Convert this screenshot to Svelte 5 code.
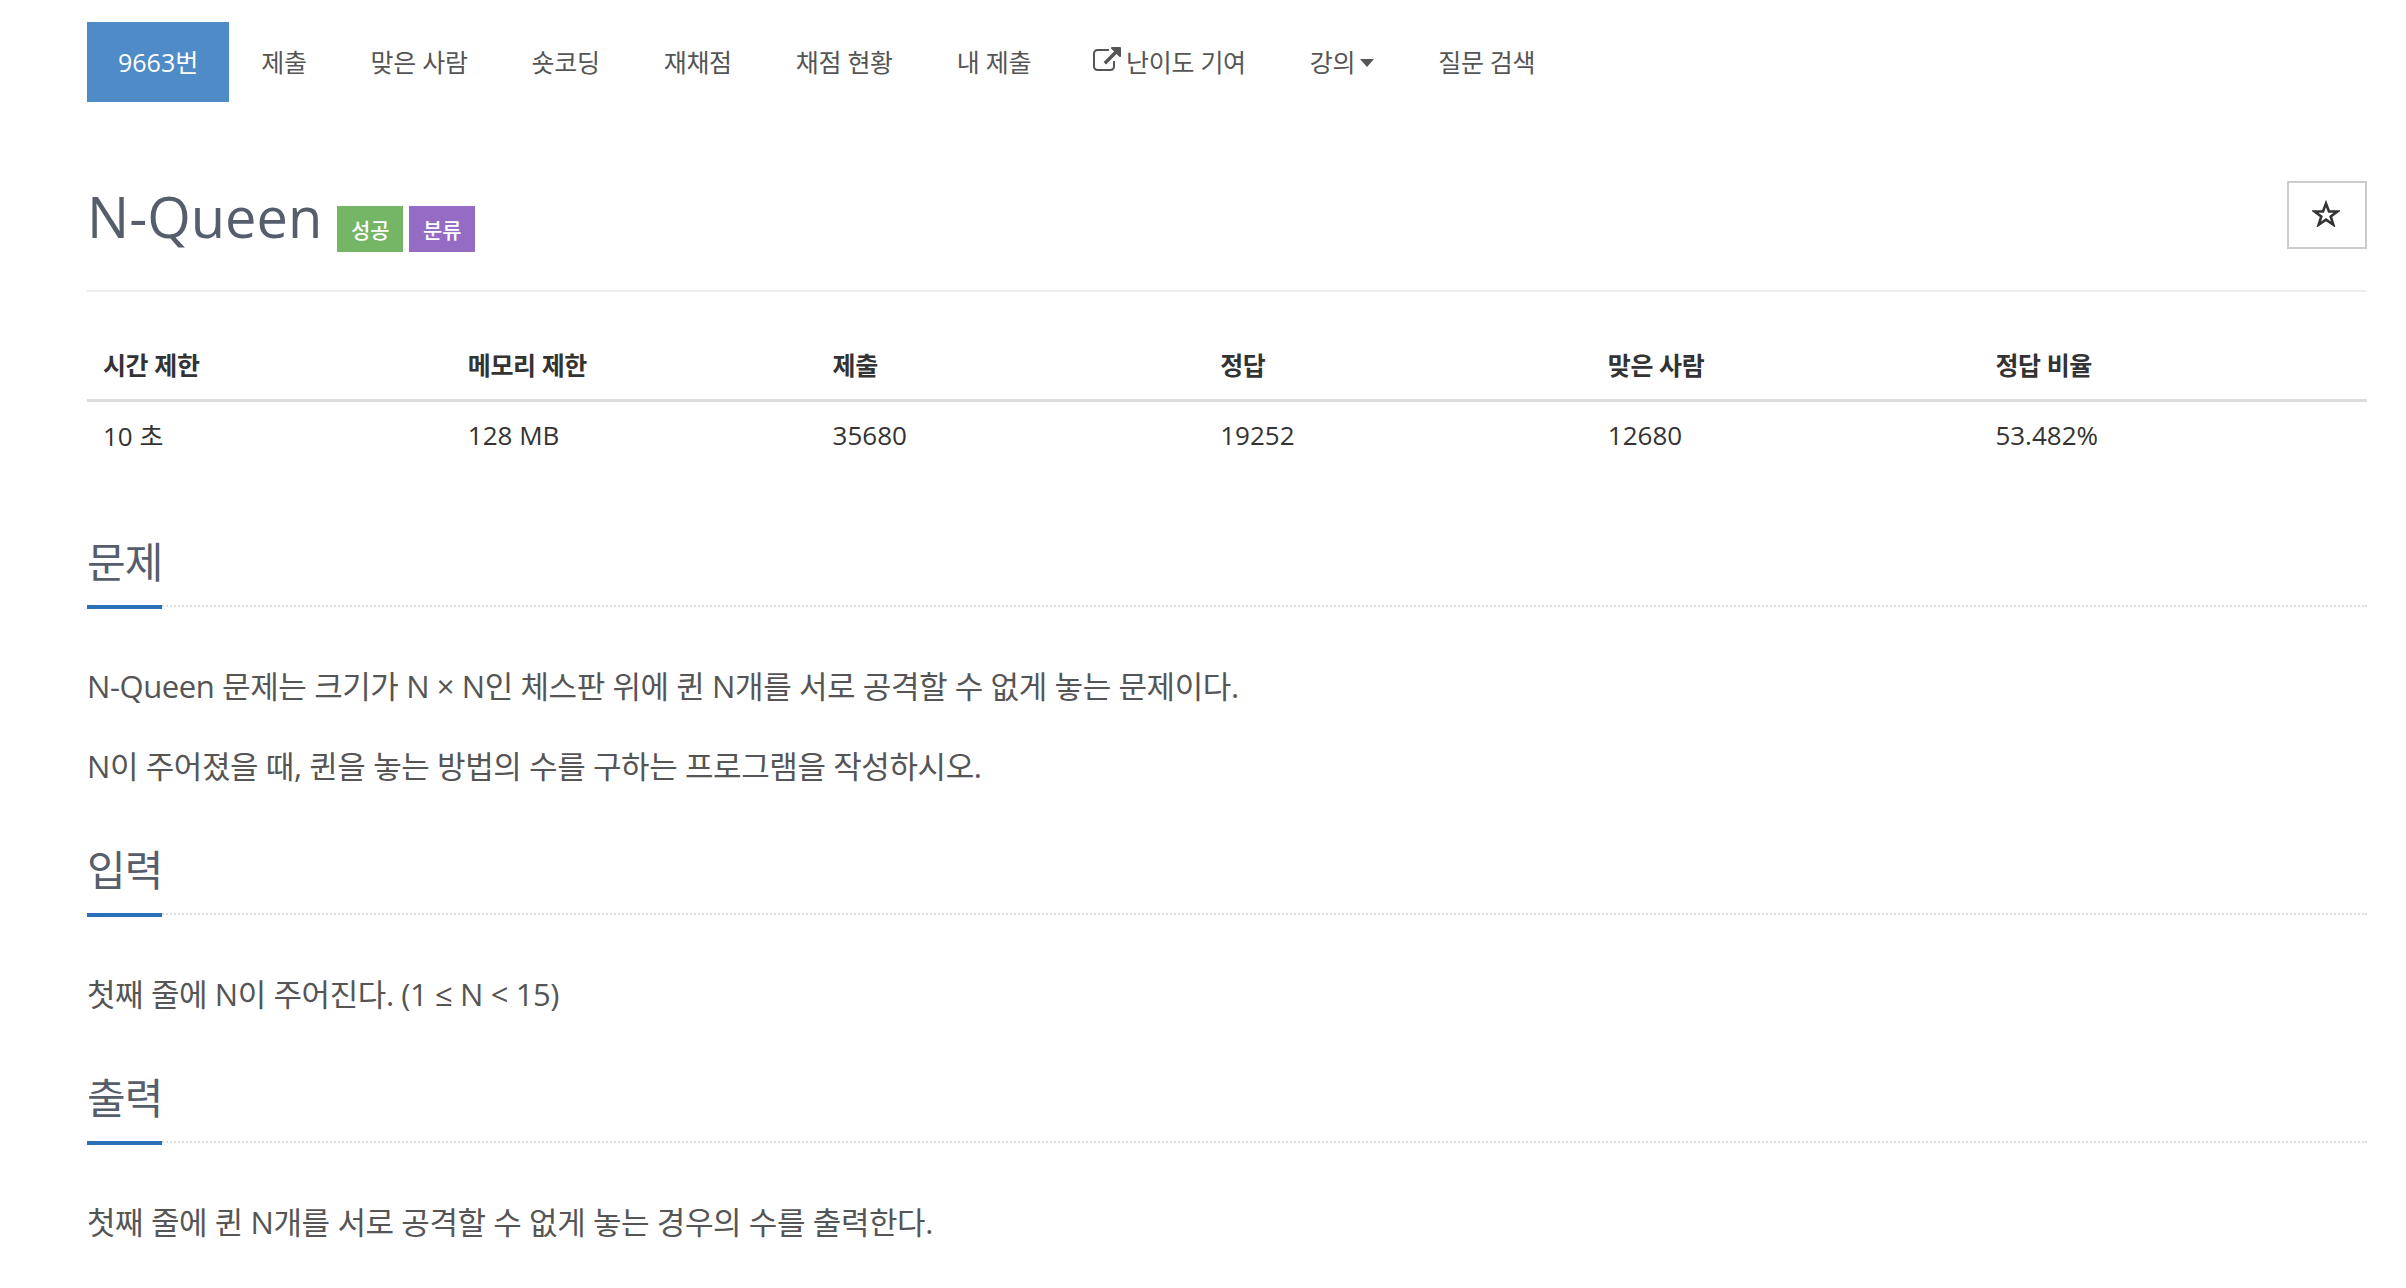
<script>
	const tabs = ['제출', '맞은 사람', '숏코딩', '재채점', '채점 현황', '내 제출'];
	const heads = ['시간 제한', '메모리 제한', '제출', '정답', '맞은 사람', '정답 비율'];
	const cells = ['10 초', '128 MB', '35680', '19252', '12680', '53.482%'];
</script>

<div class="page">
	<ul class="tabs">
		<li class="active"><a href="#top">9663번</a></li>
		{#each tabs as tab}
			<li><a href="#top">{tab}</a></li>
		{/each}
		<li>
			<a href="#top">
				<svg class="ext" viewBox="0 0 1792 1792" width="28" height="28" aria-hidden="true">
					<path
						fill="currentColor"
						d="M1408 928v320q0 119-84.500 203.500t-203.500 84.500h-832q-119 0-203.500-84.500t-84.500-203.500v-832q0-119 84.500-203.500t203.500-84.500h704q14 0 23 9t9 23v64q0 14-9 23t-23 9h-704q-66 0-113 47t-47 113v832q0 66 47 113t113 47h832q66 0 113-47t47-113v-320q0-14 9-23t23-9h64q14 0 23 9t9 23zm384-864v512q0 26-19 45t-45 19-45-19l-176-176-652 652q-10 10-23 10t-23-10l-114-114q-10-10-10-23t10-23l652-652-176-176q-19-19-19-45t19-45 45-19h512q26 0 45 19t19 45z"
					/>
				</svg>
				난이도 기여
			</a>
		</li>
		<li><a href="#top">강의<span class="caret"></span></a></li>
		<li><a href="#top">질문 검색</a></li>
	</ul>

	<div class="title">
		<h1>N-Queen</h1>
		<span class="label green">성공</span>
		<span class="label purple">분류</span>
		<button class="star" aria-label="즐겨찾기">
			<svg viewBox="0 0 28 27" width="28" height="27" aria-hidden="true">
				<path
					d="M14 3.500l3 8h8.500l-6.800 5 2.600 8.200-7.300-5-7.300 5 2.600-8.200-6.800-5H11z"
					fill="none"
					stroke="currentColor"
					stroke-width="2.600"
				/>
			</svg>
		</button>
	</div>

	<table>
		<thead>
			<tr>
				{#each heads as h}<th>{h}</th>{/each}
			</tr>
		</thead>
		<tbody>
			<tr>
				{#each cells as c}<td>{c}</td>{/each}
			</tr>
		</tbody>
	</table>

	<section class="first">
		<h2><span>문제</span></h2>
		<p>N-Queen 문제는 크기가 N × N인 체스판 위에 퀸 N개를 서로 공격할 수 없게 놓는 문제이다.</p>
		<p>N이 주어졌을 때, 퀸을 놓는 방법의 수를 구하는 프로그램을 작성하시오.</p>
	</section>
	<section>
		<h2><span>입력</span></h2>
		<p>첫째 줄에 N이 주어진다. (1 ≤ N &lt; 15)</p>
	</section>
	<section>
		<h2><span>출력</span></h2>
		<p>첫째 줄에 퀸 N개를 서로 공격할 수 없게 놓는 경우의 수를 출력한다.</p>
	</section>
</div>

<style>
	:global(body) {
		background: #fff;
		overflow: hidden;
	}
	.page {
		height: 1288px;
		overflow: hidden;
		box-sizing: border-box;
		padding: 22px 39px 0 87px;
		font-family: 'Open Sans', 'Noto Sans CJK KR', sans-serif;
		color: #333;
	}
	.tabs {
		display: flex;
		list-style: none;
		margin: 0;
		padding: 0;
		height: 80px;
	}
	.tabs a {
		display: flex;
		align-items: center;
		box-sizing: border-box;
		height: 100%;
		padding: 0 32px 2px;
		font-size: 25px;
		letter-spacing: -0.3px;
		color: #555;
		text-decoration: none;
	}
	.tabs .active a {
		background: #4f8bc6;
		color: #fff;
		padding: 0 31px 2px;
		letter-spacing: 0;
	}
	.ext {
		margin: 0 5px 0 -2px;
	}
	.caret {
		display: inline-block;
		margin-left: 5px;
		margin-top: 4px;
		border-top: 8px solid #555;
		border-left: 7.5px solid transparent;
		border-right: 7.5px solid transparent;
	}
	.title {
		display: flex;
		align-items: flex-end;
		height: 190px;
		box-sizing: border-box;
		padding-bottom: 38px;
		border-bottom: 2px solid #eee;
	}
	h1 {
		margin: 0 15px -2px 0;
		font-size: 56px;
		font-weight: 400;
		line-height: 76px;
		color: #555e6a;
	}
	.label {
		width: 66px;
		height: 46px;
		margin-right: 6px;
		display: flex;
		align-items: center;
		justify-content: center;
		font-size: 21px;
		font-weight: 500;
		color: #fff;
	}
	.green {
		background: #74b566;
	}
	.purple {
		background: #956cc4;
	}
	.star {
		margin-left: auto;
		width: 80px;
		height: 68px;
		margin-bottom: 3px;
		background: #fff;
		border: 2px solid #ccc;
		color: #333;
		padding: 0 3px 3px 0;
		display: flex;
		align-items: center;
		justify-content: center;
	}
	table {
		width: 100%;
		margin-top: 28px;
		border-collapse: collapse;
		table-layout: fixed;
		font-size: 26px;
	}
	th, td {
		box-sizing: border-box;
		padding: 0 16px;
		text-align: left;
		width: 17%;
	}
	th {
		height: 80px;
		padding-bottom: 17px;
		vertical-align: bottom;
		border-bottom: 3px solid #ddd;
		font-size: 25px;
		font-weight: 700;
		letter-spacing: -0.4px;
	}
	td {
		height: 68px;
		color: #333;
	}
	th:nth-child(1), th:nth-child(2) {
		width: 16%;
	}
	section {
		margin-top: 54px;
	}
	section.first {
		margin-top: 64px;
	}
	h2 {
		margin: 0 0 59px;
		height: 73px;
		font-size: 42px;
		font-weight: 400;
		line-height: 60px;
		color: #555e6a;
		border-bottom: 2px dotted #ddd;
	}
	h2 span {
		display: inline-block;
		height: 73px;
		border-bottom: 4px solid #2b6fba;
		letter-spacing: -1px;
	}
	p {
		margin: 0 0 40px;
		font-size: 31px;
		line-height: 40px;
		color: #555;
		letter-spacing: -0.4px;
	}
</style>
